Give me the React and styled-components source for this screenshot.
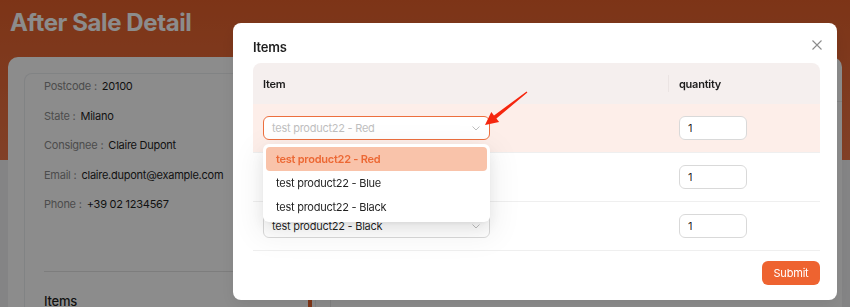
import React from "react";
import styled, { createGlobalStyle } from "styled-components";

const GlobalStyle = createGlobalStyle`
  html, body {
    margin: 0;
    padding: 0;
  }
  body {
    font-family: Inter, "Noto Sans", sans-serif;
    color: rgba(0, 0, 0, 0.88);
    letter-spacing: -0.25px;
    overflow: hidden;
  }
`;

const Page = styled.div`
  width: 850px;
  height: 307px;
  overflow: hidden;
  box-sizing: border-box;
  padding: 9px 8px 0 8px;
  background: linear-gradient(to bottom, #e3602b 0, #ec7547 160px, #f0f1f3 160px);
`;

const PageTitle = styled.h1`
  margin: 0 0 20px 2px;
  font-size: 24px;
  line-height: 28px;
  font-weight: 700;
  letter-spacing: -0.4px;
  color: #fff;
`;

const Card = styled.div`
  display: flex;
  height: 260px;
  background: #fff;
  border-radius: 10px 10px 0 0;
  padding: 16px 0 0 16px;
  box-sizing: border-box;
`;

const LeftBox = styled.div`
  width: 292px;
  flex: none;
  box-sizing: border-box;
  border: 1px solid #eceef1;
  border-bottom: none;
  border-radius: 8px 8px 0 0;
  padding: 2px 0 0 19px;
`;

const DetailList = styled.div`
  display: flex;
  flex-direction: column;
  gap: 9.5px;
`;

const DetailRow = styled.div`
  font-size: 11px;
  line-height: 20px;
  color: #1f1f1f;
`;

const Label = styled.span`
  color: #8c8c8c;

  &::after {
    content: ":";
    margin: 0 5px 0 3px;
  }
`;

const Divider = styled.div`
  margin: 57px 20px 0 0;
  border-top: 1px solid #e3e3e3;
`;

const ItemsHeading = styled.div`
  display: flex;
  justify-content: space-between;
  margin-top: 19px;
  font-size: 13px;
  line-height: 20px;
  font-weight: 500;
`;

const Accent = styled.span`
  width: 4px;
  height: 20px;
  margin-top: 6px;
  margin-right: 3px;
  background: #e8632c;
`;

const RightColumn = styled.div`
  flex: 1;
  margin-left: 14px;
  border-left: 1px solid #ececec;
`;

const RightHeader = styled.div`
  height: 28px;
  border-bottom: 1px solid #ececec;
`;

const Overlay = styled.div`
  position: fixed;
  inset: 0;
  background: rgba(0, 0, 0, 0.45);
`;

const Modal = styled.div`
  position: fixed;
  left: 233px;
  top: 23px;
  width: 604px;
  height: 277px;
  box-sizing: border-box;
  padding: 13px 17px 15px 20px;
  background: #fff;
  border-radius: 8px;
  box-shadow: 0 6px 16px rgba(0, 0, 0, 0.08);
`;

const ModalTitle = styled.div`
  font-size: 13px;
  line-height: 22px;
  font-weight: 600;
  margin-bottom: 5px;
`;

const CloseButton = styled.button`
  position: absolute;
  top: 17px;
  right: 15px;
  width: 10px;
  height: 10px;
  padding: 0;
  border: none;
  background: none;
  display: flex;
`;

const Table = styled.div`
  width: 567px;
`;

const Row = styled.div`
  display: grid;
  grid-template-columns: 416px 1fr;
  height: ${(p) => (p.$head ? "41px" : "49px")};
  box-sizing: border-box;
  background: ${(p) => (p.$head ? "#f5efee" : p.$active ? "#fdeee9" : "#fff")};
  border-radius: ${(p) => (p.$head ? "8px 8px 0 0" : "0")};
  border-bottom: ${(p) => (p.$head ? "none" : "1px solid #efefef")};
`;

const Cell = styled.div`
  position: relative;
  display: flex;
  align-items: center;
  padding: 0 10px;
  font-size: 11px;
  font-weight: ${(p) => (p.$head ? 600 : 400)};

  ${(p) =>
    p.$divider &&
    `&::after {
      content: "";
      position: absolute;
      right: 0;
      top: 12px;
      width: 1px;
      height: 17px;
      background: #ebe4e3;
    }`}
`;

const SelectWrap = styled.div`
  position: relative;
`;

const SelectBox = styled.div`
  width: 227px;
  height: 24px;
  box-sizing: border-box;
  display: flex;
  align-items: center;
  justify-content: space-between;
  padding: 0 9px 0 8px;
  background: #fff;
  border: 1px solid ${(p) => (p.$open ? "#ec6f3e" : "#d9d9d9")};
  border-radius: 6px;
  font-size: 11px;
  color: ${(p) => (p.$open ? "#bfbfbf" : "rgba(0,0,0,0.88)")};
`;

const Dropdown = styled.div`
  position: absolute;
  top: calc(100% + 4px);
  left: 0;
  z-index: 5;
  width: 227px;
  box-sizing: border-box;
  padding: 3px;
  background: #fff;
  border-radius: 6px;
  box-shadow: 0 6px 16px rgba(0, 0, 0, 0.08), 0 3px 6px -4px rgba(0, 0, 0, 0.12),
    0 9px 28px 8px rgba(0, 0, 0, 0.05);
`;

const Option = styled.div`
  height: 24px;
  line-height: 24px;
  padding: 0 10px;
  border-radius: 4px;
  font-size: 11px;
  font-weight: ${(p) => (p.$selected ? 600 : 400)};
  color: ${(p) => (p.$selected ? "#ec6834" : "rgba(0,0,0,0.88)")};
  background: ${(p) => (p.$selected ? "#f9c3aa" : "transparent")};
`;

const QtyInput = styled.div`
  width: 68px;
  height: 24px;
  box-sizing: border-box;
  display: flex;
  align-items: center;
  padding: 0 8px;
  background: #fff;
  border: 1px solid #d9d9d9;
  border-radius: 6px;
  font-size: 11px;
`;

const Footer = styled.div`
  display: flex;
  justify-content: flex-end;
  margin-top: 10px;
`;

const SubmitButton = styled.button`
  width: 58px;
  height: 24px;
  border: none;
  border-radius: 6px;
  background: #ee6330;
  color: #fff;
  font-family: inherit;
  font-size: 11px;
  letter-spacing: -0.2px;
  padding: 0;
`;

const Annotation = styled.svg`
  position: fixed;
  left: 478px;
  top: 86px;
`;

const Chevron = () => (
  <svg width="8" height="5" viewBox="0 0 8 5">
    <path d="M0.5 0.5 L4 4 L7.5 0.5" fill="none" stroke="#bfbfbf" strokeWidth="1" />
  </svg>
);

const details = [
  ["Postcode", "20100"],
  ["State", "Milano"],
  ["Consignee", "Claire Dupont"],
  ["Email", "claire.dupont@example.com"],
  ["Phone", "+39 02 1234567"],
];

const rows = [
  { value: "test product22 - Red", qty: 1, open: true },
  { value: "test product22 - Blue", qty: 1 },
  { value: "test product22 - Black", qty: 1 },
];

const options = ["test product22 - Red", "test product22 - Blue", "test product22 - Black"];

export default function App() {
  return (
    <>
      <GlobalStyle />
      <Page>
        <PageTitle>After Sale Detail</PageTitle>
        <Card>
          <LeftBox>
            <DetailList>
              {details.map(([k, v]) => (
                <DetailRow key={k}>
                  <Label>{k}</Label>
                  {v}
                </DetailRow>
              ))}
            </DetailList>
            <Divider />
            <ItemsHeading>
              Items
              <Accent />
            </ItemsHeading>
          </LeftBox>
          <RightColumn>
            <RightHeader />
          </RightColumn>
        </Card>
      </Page>

      <Overlay />
      <Modal>
        <ModalTitle>Items</ModalTitle>
        <CloseButton aria-label="close">
          <svg width="10" height="10" viewBox="0 0 10 10">
            <path d="M0.5 0.5 L9.5 9.5 M9.5 0.5 L0.5 9.5" stroke="#8c8c8c" strokeWidth="1.1" />
          </svg>
        </CloseButton>
        <Table>
          <Row $head>
            <Cell $head $divider>Item</Cell>
            <Cell $head>quantity</Cell>
          </Row>
          {rows.map((r, i) => (
            <Row key={i} $active={r.open}>
              <Cell>
                <SelectWrap>
                  <SelectBox $open={r.open}>
                    <span>{r.value}</span>
                    <Chevron />
                  </SelectBox>
                  {r.open && (
                    <Dropdown>
                      {options.map((o) => (
                        <Option key={o} $selected={o === r.value}>
                          {o}
                        </Option>
                      ))}
                    </Dropdown>
                  )}
                </SelectWrap>
              </Cell>
              <Cell>
                <QtyInput>{r.qty}</QtyInput>
              </Cell>
            </Row>
          ))}
        </Table>
        <Footer>
          <SubmitButton>Submit</SubmitButton>
        </Footer>
      </Modal>

      <Annotation width="56" height="46" viewBox="0 0 56 46">
        <polygon
          points="48.6,5.5 16,29.4 13.3,26.1 7,39 21.1,35.9 18.4,32.6 49.4,6.5"
          fill="#f5260e"
        />
      </Annotation>
    </>
  );
}
